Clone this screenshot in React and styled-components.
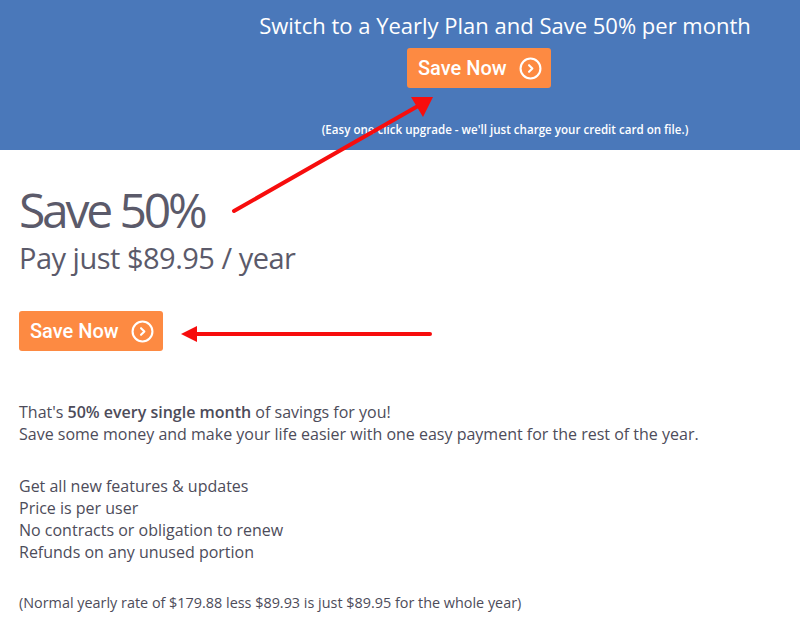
import styled, { createGlobalStyle } from "styled-components";

const GlobalStyle = createGlobalStyle`
  html, body {
    margin: 0;
    padding: 0;
    background: #fff;
  }
  body {
    font-family: "Open Sans", "Liberation Sans", sans-serif;
  }
`;

const Page = styled.div`
  position: relative;
  width: 800px;
  height: 622px;
  overflow: hidden;
  background: #fff;
`;

const Banner = styled.header`
  display: flex;
  flex-direction: column;
  align-items: center;
  height: 150px;
  box-sizing: border-box;
  padding: 10px 0 0 210px;
  background: #4a78ba;
  color: #fff;
`;

const BannerTitle = styled.h2`
  margin: 0;
  font-size: 22px;
  font-weight: 400;
  line-height: 30px;
  white-space: nowrap;
`;

const BannerNote = styled.p`
  margin: 34px 0 0;
  font-size: 11.6px;
  font-weight: 600;
  white-space: nowrap;
`;

const Button = styled.button`
  display: flex;
  align-items: center;
  gap: 12px;
  width: 144px;
  height: 40px;
  margin: ${(p) => p.$margin || "0"};
  padding: 0 0 0 11px;
  border: 0;
  border-radius: 3px;
  background: #fd8a42;
  color: #fff;
  font-family: Roboto, "Liberation Sans", sans-serif;
  font-size: 20px;
  font-weight: 500;
  cursor: pointer;
`;

const Main = styled.main`
  padding: 32px 19px 0;
  color: #5b5a6a;
`;

const Headline = styled.h1`
  margin: 0;
  font-size: 48px;
  font-weight: 400;
  line-height: 56px;
  letter-spacing: -3.2px;
`;

const Subline = styled.h3`
  margin: 2px 0 0;
  font-size: 29px;
  font-weight: 400;
  line-height: 36px;
  letter-spacing: -0.5px;
`;

const Copy = styled.p`
  margin: ${(p) => p.$margin || "0"};
  font-size: ${(p) => p.$size || "16px"};
  line-height: 22px;
  color: #4d4c5a;
  white-space: nowrap;

  b {
    font-weight: 600;
  }
`;

const Arrows = styled.svg`
  position: absolute;
  left: 0;
  top: 0;
  pointer-events: none;
`;

function CircleChevron() {
  return (
    <svg width="23" height="23" viewBox="0 0 22 22" fill="none">
      <circle cx="11" cy="11" r="9.5" stroke="#fff" strokeWidth="2" />
      <path d="M9.6 7.8 L12.8 11 L9.6 14.2" stroke="#fff" strokeWidth="2" strokeLinecap="round" strokeLinejoin="round" />
    </svg>
  );
}

function SaveButton({ margin }) {
  return (
    <Button $margin={margin}>
      Save Now
      <CircleChevron />
    </Button>
  );
}

export default function App() {
  return (
    <Page>
      <GlobalStyle />
      <Banner>
        <BannerTitle>Switch to a Yearly Plan and Save 50% per month</BannerTitle>
        <SaveButton margin="8px 52px 0 0" />
        <BannerNote>
          (Easy one click upgrade - we'll just charge your credit card on file.)
        </BannerNote>
      </Banner>
      <Main>
        <Headline>Save 50%</Headline>
        <Subline>Pay just $89.95 / year</Subline>
        <SaveButton margin="35px 0 0" />
        <Copy $margin="50px 0 0">
          That's <b>50% every single month</b> of savings for you!
        </Copy>
        <Copy>
          Save some money and make your life easier with one easy payment for the rest of the year.
        </Copy>
        <Copy $margin="30px 0 0">Get all new features &amp; updates</Copy>
        <Copy>Price is per user</Copy>
        <Copy>No contracts or obligation to renew</Copy>
        <Copy>Refunds on any unused portion</Copy>
        <Copy $margin="29px 0 0" $size="14.4px">
          (Normal yearly rate of $179.88 less $89.93 is just $89.95 for the whole year)
        </Copy>
      </Main>
      <Arrows width="800" height="622" viewBox="0 0 800 622">
        <line x1="234" y1="211" x2="418" y2="106" stroke="#f70d0d" strokeWidth="4" strokeLinecap="round" />
        <polygon points="433,97 411,97 423,117" fill="#f70d0d" />
        <line x1="430" y1="334" x2="195" y2="334" stroke="#f70d0d" strokeWidth="4" strokeLinecap="round" />
        <polygon points="181,334 197,326 197,342" fill="#f70d0d" />
      </Arrows>
    </Page>
  );
}
